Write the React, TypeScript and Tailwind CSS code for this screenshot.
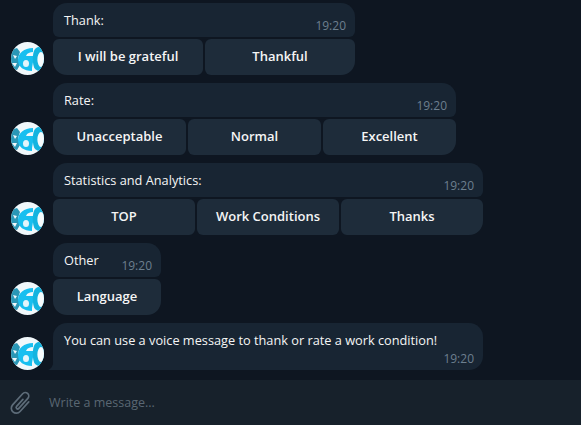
import React from "react";

function Avatar() {
  return (
    <svg width="33" height="33" viewBox="0 0 33 33" className="shrink-0">
      <defs>
        <clipPath id="c"><circle cx="16.5" cy="16.5" r="16.5" /></clipPath>
      </defs>
      <g clipPath="url(#c)">
        <rect width="33" height="33" fill="#f1f8fb" />
        <path d="M0 8 L6 6 L9 10 L7 16 L9 23 L6 28 L0 27 Z" fill="#2a97b6" />
        <path d="M2 13 L6 14 L4 17 Z M1 21 L6 21 L4 25 Z" fill="#f1f8fb" />
        <path d="M22 6 C13 6 7 11 7 18 C7 25 13 29 21 29 L21 26 L23 14 L15 14 C16 11 19 10 22 10 Z" fill="#18bff0" />
        <ellipse cx="15" cy="21.5" rx="3" ry="3.6" fill="#e3f5fb" />
        <path d="M24 7 C21 11 21 23 24 27 C27 30 33 29 33 27 V7 C31 4 27 4 24 7 Z" fill="#14b4e0" />
        <ellipse cx="30" cy="17.5" rx="3.6" ry="7.5" fill="#f6fbfd" />
      </g>
    </svg>
  );
}

function Time({ children }: { children: string }) {
  return <span className="text-[12px] leading-[16px] text-[#6d7f8f]">{children}</span>;
}

function Keyboard({ labels, title, width, cols }: { labels: string[]; title: string; width: string; cols: string }) {
  return (
    <div className="flex items-end gap-[9px] pl-[11px]">
      <Avatar />
      <div className={`flex flex-col gap-[2px] ${width}`}>
        <div className="flex h-[34px] justify-between rounded-t-[14px] rounded-b-[6px] bg-[#182533] pl-[11px] pr-[9px]">
          <span className="pt-[8px] text-[12.75px] leading-[18px] text-[#f5f5f5]">{title}</span>
          <span className="pt-[13px] leading-[16px]"><Time>19:20</Time></span>
        </div>
        <div className={`grid gap-[2px] ${cols}`}>
          {labels.map((l, i) => (
            <div
              key={l}
              className={`flex h-[36px] items-center justify-center rounded-[6px] bg-[#1e2c3a] text-[13px] font-semibold text-[#f5f5f5] ${i === 0 ? "rounded-bl-[14px]" : ""} ${i === labels.length - 1 ? "rounded-br-[14px]" : ""}`}
            >
              {l}
            </div>
          ))}
        </div>
      </div>
    </div>
  );
}

export default function App() {
  return (
    <div className="flex h-[425px] w-[581px] flex-col overflow-hidden bg-[#0e1621] font-['Open_Sans',sans-serif]">
      <div className="flex h-[380px] flex-col gap-2 pt-[3px]">
        <Keyboard title="Thank:" labels={["I will be grateful", "Thankful"]} width="w-[302px]" cols="grid-cols-2" />
        <Keyboard title="Rate:" labels={["Unacceptable", "Normal", "Excellent"]} width="w-[403px]" cols="grid-cols-3" />
        <Keyboard title="Statistics and Analytics:" labels={["TOP", "Work Conditions", "Thanks"]} width="w-[430px]" cols="grid-cols-3" />
        <Keyboard title="Other" labels={["Language"]} width="w-[108px]" cols="grid-cols-1" />
        <div className="flex items-end gap-[9px] pl-[11px]">
          <Avatar />
          <div className="relative h-[47px] w-[430px] rounded-t-[14px] rounded-br-[14px] bg-[#182533] pl-[11px] pr-[9px] pt-[8px]">
            <div className="text-[12.75px] leading-[18px] text-[#f5f5f5]">You can use a voice message to thank or rate a work condition!</div>
            <div className="text-right leading-[16px]"><Time>19:20</Time></div>
            <svg width="6" height="10" viewBox="0 0 6 10" className="absolute bottom-0 left-[-5px]">
              <path d="M6 0 V10 H0 C3 9 5 6 6 0 Z" fill="#182533" />
            </svg>
          </div>
        </div>
      </div>
      <div className="flex h-[45px] items-center bg-[#17212b]">
        <svg width="24" height="26" viewBox="0 0 24 26" fill="none" stroke="#5d6c79" strokeWidth="1.7" strokeLinecap="round" strokeLinejoin="round" className="ml-[9px] mt-[1px]">
          <path transform="translate(12 13) rotate(42)" d="M5 -6 V7 A5 5 0 0 1 -5 7 V-8 A3.5 3.5 0 0 1 2 -8 V5.5 A1.3 1.3 0 0 1 -1 5.5 V-4" />
        </svg>
        <span className="ml-[16px] mt-[2px] text-[12.5px] text-[#5a6773]">Write a message...</span>
      </div>
    </div>
  );
}
